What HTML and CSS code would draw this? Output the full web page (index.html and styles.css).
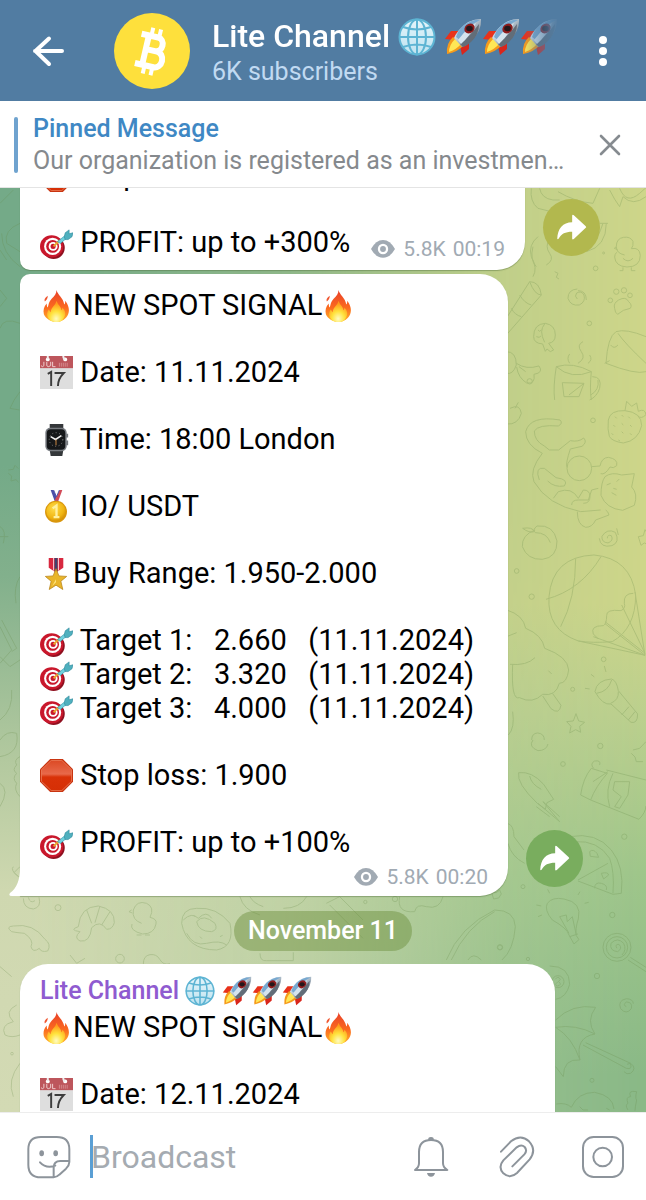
FILE: index.html
```html
<!DOCTYPE html>
<html lang="en">
<head>
<meta charset="utf-8">
<meta name="viewport" content="width=device-width, initial-scale=1">
<title>Lite Channel</title>
<link rel="stylesheet" href="styles.css">
</head>
<body>
<svg class="defs" aria-hidden="true">
  <defs>
    <linearGradient id="gFire" x1="0" y1="0" x2="0" y2="1"><stop offset="0" stop-color="#e8402a"/><stop offset=".55" stop-color="#fb6a1f"/><stop offset="1" stop-color="#ffb52b"/></linearGradient>
    <radialGradient id="gCore" cx=".5" cy=".85" r=".7"><stop offset="0" stop-color="#fffbc0"/><stop offset=".5" stop-color="#ffe23c"/><stop offset="1" stop-color="#ff9a1c"/></radialGradient>
    <linearGradient id="gStop" x1="0" y1="0" x2="0" y2="1"><stop offset="0" stop-color="#dc4a25"/><stop offset=".45" stop-color="#e8694a"/><stop offset=".55" stop-color="#d93208"/><stop offset="1" stop-color="#d62f05"/></linearGradient>
    <radialGradient id="gGold" cx=".4" cy=".35" r=".7"><stop offset="0" stop-color="#ffdc4a"/><stop offset=".7" stop-color="#f0b512"/><stop offset="1" stop-color="#d08d06"/></radialGradient>
    <linearGradient id="gHull" x1="0" y1="0" x2="1" y2="1"><stop offset="0" stop-color="#4d87b8"/><stop offset=".35" stop-color="#c9dcea"/><stop offset=".6" stop-color="#9aa7b3"/><stop offset="1" stop-color="#3f4a55"/></linearGradient>
    <linearGradient id="gGlobe" x1="0" y1="0" x2="0" y2="1"><stop offset="0" stop-color="#e3f4fa"/><stop offset="1" stop-color="#bfe3f0"/></linearGradient>
    <symbol id="fire" viewBox="0 0 34 34">
      <path d="M17 1c1 5 7 8 8 15 1-1 1-3 1-4 3 4 5 9 3 14-2 5-7 8-12 8S6 31 4 26c-1-4 0-8 3-11 0 2 0 3 1 4 1-3 1-6 4-9 3-3 5-5 5-9z" fill="url(#gFire)"/>
      <path d="M17 12c1 4 5 6 5 10 1-1 1-2 1-3 3 3 4 7 2 10-2 4-5 5-8 5s-7-1-9-5c-1-3-1-5 1-8 1 1 1 2 2 3 0-5 5-7 6-12z" fill="url(#gCore)"/>
      <path d="M5 13c-1-2 0-4 3-6 0 3-1 4-3 6z" fill="#ef5630"/>
    </symbol>
    <symbol id="dart" viewBox="0 0 34 34">
      <ellipse cx="14" cy="22.500" rx="11.500" ry="11.500" fill="#8f1020"/>
      <ellipse cx="12" cy="21" rx="12" ry="11.500" fill="#c9182c"/>
      <circle cx="13" cy="21" r="8.800" fill="#fff"/><circle cx="13" cy="21" r="6.600" fill="#c9182c"/>
      <circle cx="13.500" cy="21" r="4.600" fill="#fff"/><circle cx="13.500" cy="21" r="2.600" fill="#c9182c"/>
      <path d="M14 21l6-6" stroke="#e9a62c" stroke-width="2"/>
      <path d="M18 16l9-7 1 3-7 6z" fill="#6fd0dc" stroke="#2791a5" stroke-width=".6"/>
      <path d="M25 11l1-4 4-3 0 4 4-1-1 4-4 3-3 0z" fill="#4fb0be" stroke="#2b8799" stroke-width=".6"/>
    </symbol>
    <symbol id="calendar" viewBox="0 0 34 34">
      <rect width="34" height="34" fill="#dedede"/><rect width="34" height="12.500" fill="#bd565c"/>
      <circle cx="8" cy="3.500" r="2" fill="#fff"/><circle cx="26" cy="3.500" r="2" fill="#fff"/><path d="M8 0v3M24 0q0 3 2 3" stroke="#eee" stroke-width="2" fill="none"/>
      <path d="M4 6v4q-1 2-3 0M7 6v4q1 2 4 0V6M13 6v5h3" fill="none" stroke="#f0d0d0" stroke-width="1"/><path d="M20 7v4m2-4v4m2-4v4m2-4v4m2-4v4" stroke="#d58a8e" stroke-width="1"/>
      <path d="M8 18.500l3.500-2V31M15 17.500h9.500q-6 6-6 13.500" fill="none" stroke="#3d3d3d" stroke-width="2"/>
    </symbol>
    <symbol id="watch" viewBox="0 0 34 34">
      <path d="M10 1h14v5H10zM10 28h14l-1 6H11z" fill="#34373a"/>
      <rect x="5.500" y="5" width="22" height="24" rx="5" fill="#777b80"/><rect x="7" y="6.500" width="19" height="21" rx="4" fill="#151719"/><path d="M28 11v4m0 3v5" stroke="#777b80" stroke-width="2"/>
      <circle cx="16.500" cy="17" r="7" fill="none" stroke="#888" stroke-dasharray="1 2.600"/><path d="M11 14l5 3 6-4" fill="none" stroke="#eee" stroke-width="1.600"/><path d="M16.500 17v6" stroke="#d18b45"/>
    </symbol>
    <symbol id="medal" viewBox="0 0 34 34">
      <path d="M11 0h3l5 11h-4z" fill="#4b4fa8"/><path d="M23 0h-3l-5 11h4z" fill="#d24b58"/><path d="M14 0l3 7 3-7" fill="#fff" stroke="#4b4fa8"/>
      <circle cx="16.500" cy="22.500" r="11.300" fill="#d9960c"/><circle cx="16.500" cy="22" r="10" fill="url(#gGold)"/>
      <path d="M13 19l4-3v12m-3 0h6" fill="none" stroke="#fff0a0" stroke-width="2.400"/>
    </symbol>
    <symbol id="star" viewBox="0 0 34 34">
      <path d="M9 1h15v10l-7.500 5L9 11z" fill="#d8283f"/><path d="M15 1h3v14h-3z" fill="#40426c"/><path d="M14 1v13m5-13v13" stroke="#fff" stroke-width=".8"/>
      <path d="M16.500 12l3 7.500 8 .5-6 5 2 8.500-7-4.500-7 4.500 2-8.500-6-5 8-.5z" fill="#e9b52a" stroke="#b9851b" stroke-width=".8"/><path d="M16.500 14v9l-4 7 4-4z" fill="#ffe47a"/>
    </symbol>
    <symbol id="stop" viewBox="0 0 34 34">
      <path d="M10.500 0h13L34 10.500v13L23.500 34h-13L0 23.500v-13z" fill="#c9330f"/><path d="M11.500 1.500h11L32.500 11v12l-10 9.500h-11L1.500 23V11z" fill="url(#gStop)" stroke="#f08a68" stroke-width=".7"/>
    </symbol>
    <symbol id="rocket" viewBox="0 0 38 38">
      <path d="M15 13l-8 0-6 8 9 1z" fill="#e8321b"/><path d="M25 22v9l-7 6-2-9z" fill="#d9261c"/>
      <path d="M9 19q-7 6-6 17 11-2 17-9z" fill="#f59a1c"/><path d="M11 21q-6 6-6 13 8-3 12-8z" fill="#ffe756"/>
      <path d="M37 1q-13 0-22 11-4 5-5 8l8 9q4-1 9-6Q38 13 37 1z" fill="url(#gHull)"/>
      <path d="M31 2q-10 2-17 12l-2 5 4 3Q23 8 36 2z" fill="#78a9d0"/><path d="M35 6q-8 11-19 20l3 3q4-1 8-5 8-7 8-18z" fill="#626d78"/><path d="M32 5Q24 9 14 22l3 4q9-8 15-21z" fill="#d5e4ee"/>
      <ellipse cx="25.500" cy="10.500" rx="5.500" ry="4.500" transform="rotate(-40 25.500 10.500)" fill="#8e1c1c"/><ellipse cx="25.500" cy="10.500" rx="3.300" ry="2.700" fill="#25171a"/>
    </symbol>
    <symbol id="globe" viewBox="0 0 38 38">
      <circle cx="19" cy="19" r="17.500" fill="url(#gGlobe)"/>
      <g fill="none" stroke="#5db4d3" stroke-width="2"><circle cx="19" cy="19" r="17.500"/><ellipse cx="19" cy="19" rx="9" ry="17.500"/><path d="M19 1v36M1 19h36M5 9q14 5 28 0M5 29q14-5 28 0"/></g>
    </symbol>
    <symbol id="eye" viewBox="142 172 80 72"><path d="M145 208q15-28 37-28t37 28q-15 27-37 27t-37-27z" fill="#a1aab3"/><circle cx="182" cy="208" r="16" fill="#fff"/><circle cx="182" cy="208" r="9" fill="#a1aab3"/></symbol>
    <symbol id="share" viewBox="655 55 172 172"><path d="M698 175c1-31 17-50 45-50v-20q1-4 5-1l36 33q3 3 0 5l-36 34q-4 3-5-1v-21c-21 0-32 6-41 21q-3 3-4 0z" fill="#fff"/></symbol>
  </defs>
</svg>

<header class="topbar">
  <button class="icon-btn" aria-label="Back"><svg viewBox="0 0 48 48"><path d="M38 24H11M25 11.500L11.500 24 25 37" fill="none" stroke="#fff" stroke-width="4" stroke-linecap="round" stroke-linejoin="round"/></svg></button>
  <svg class="avatar" viewBox="0 0 76 76" role="img" aria-label="Channel logo"><circle cx="38" cy="38" r="38" fill="#fee03c"/><g transform="rotate(13 38 38)" fill="none" stroke="#fff" stroke-width="6"><path d="M24 23.500H41a6 7 0 0 1 0 14H31M31 37.500H43a7 8 0 0 1 0 16H24M31.500 23.500v30"/><path stroke-width="4" d="M34 15v8M42 15v8M34 54v8M42 54v8"/></g></svg>
  <div class="heading">
    <h1 class="title">Lite Channel <svg class="emoji"><use href="#globe"/></svg> <svg class="emoji"><use href="#rocket"/></svg><svg class="emoji"><use href="#rocket"/></svg><svg class="emoji"><use href="#rocket"/></svg></h1>
    <p class="subtitle">6K subscribers</p>
  </div>
  <button class="icon-btn" aria-label="Menu"><svg viewBox="0 0 48 48" fill="#fff"><circle cx="24" cy="13" r="4"/><circle cx="24" cy="24" r="4"/><circle cx="24" cy="35" r="4"/></svg></button>
</header>

<section class="pinned">
  <span class="pinned-mark"></span>
  <div class="pinned-text">
    <h2>Pinned Message</h2>
    <p>Our organization is registered as an investmen…</p>
  </div>
  <button class="icon-btn" aria-label="Close"><svg viewBox="0 0 48 48"><path d="M15 15l18 18M33 15L15 33" stroke="#868b90" stroke-width="2.600" stroke-linecap="round"/></svg></button>
</section>

<main class="chat">
  <div class="wall"></div>
  <svg class="doodles" viewBox="0 188 646 924" preserveAspectRatio="xMaxYMin slice" aria-hidden="true">
    <g transform="translate(323 180) scale(.3333)">
      <path d="M625 25q-5 40 20 60l40 10M650 25q5 30 40 35h20M705 35q50 30 105 35l20-45M860 30q15 30 30 50l10-30q30 30 69 0M890 25q20 50 60 15t19-20"/>
      <path d="M905 225q-25-5-25-25 0-25 22-28 20-3 28 12 2 15-5 22 25-5 27 20 0 35-40 35-35-2-37-30 0-8 6-14M900 262v10h-10m35-10v10h12M880 200l-6 5 10 4M900 235q15 15 30 0"/>
      <circle cx="842" cy="219" r="3"/><circle cx="818" cy="265" r="7"/><circle cx="799" cy="430" r="7"/>
      <path d="M763 357q-10-8-2-18 14-8 22 6 6 20-14 30-26 4-34-20 0-26 28-28M765 332q25 0 25 28"/>
      <path d="M875 385q-5-15 12-25 22-12 30 5 12 10 5 20-22 3-38 18-8-4-9-18z"/><circle cx="862" cy="361" r="7"/><circle cx="880" cy="335" r="8"/><circle cx="903" cy="331" r="8"/><circle cx="921" cy="346" r="7"/>
      <path d="M632 470q0-38 35-40 30 5 30 35 0 22-20 25l15 20-10 5-10-8-5 7-8-22q-27-2-27-22zM665 432q-18 20 0 55M645 450q5 8 10 0M640 470q10 5 14-2"/>
      <path d="M620 305l-70 110v50l105-120q-5-40-35-40zM655 345q-20 0-35-40M625 375q-20-5-35-30M595 410q-20-5-30-25"/>
      <path d="M645 170q-30 25-20 60 20 35 5 60M630 200q-10 40 10 60M680 175q-15 25 0 45t-10 35M695 275l10 5-5 12 8 5M850 130q0 70-60 85M840 130q-15 50-40 60M830 130h25"/>
      <path d="M550 515q30 0 30 40-10 30-30 25M580 550q30 20 68 8 15 20-15 25 5 30-22 26-25-15-30-48M588 560l20 15"/>
      <path d="M700 560q-10 60-5 100M805 575q-5 50 0 85M700 560q50-15 105 15-60 25-105-15zM808 590q30 0 22 35-8 25-30 35M825 600q5 30-22 45M718 608l65 2-15 40h-45zM783 610l-45 35M740 550q-10-15 0-28M765 550q25-15 10-35t5-30M795 550q15-10 5-25"/>
      <path d="M969 470q-60-25-90-15-25 15-30 95 90 35 120 25M885 460q20 30 84 90M863 495q10 14 22 0M845 550l15-8"/>
    </g>
    <g transform="translate(490 380) scale(.3333)">
      <circle cx="309" cy="121" r="7"/><circle cx="119" cy="4" r="8"/><path d="M60 85q30-15 34 15-10 35-44 32M75 85l10-18"/>
      <path d="M355 120q5-30 50-28 50 5 50 45-10 45-55 52-35-5-42-20-6-20-3-49zM405 92l5-28 15 15 15-10 5 25q20-10 23 10-15 15-25 3M375 110l5 5m15-10l5 5m15 0l5 5m-50 20l5 5m20-10l5 5m20 0l5 5m-60 20l5 5m25-10l5 5m20 0l5 5m-40 15l5 3"/>
      <path d="M210 120q10 10-5 18-60-5-72 15 0 30 30 45l15 12h28l35-28q25 5 40-8 12 12-5 25l-35 8q-15 45-10 55M210 120q-90-15-103 35 0 40 50 65-40 50-25 85 40 70 140 90l60-5"/><circle cx="268" cy="265" r="37"/>
      <path d="M148 300q-15-40 15-35l35 28q40 5 25 25-30 5-50-15M190 355l15-20q40-15 60 20l15-25q20 0 20 20t-20 20M245 375q0-15 20-15h30l10-30 20-5M305 260l25-2q5-25 25-26 30 5 25 25-10 10-20 4-15 25-28 20M345 290q20-15 50-5l38-4-8 40q20 20 8 55l-35 15q-50-5-65-45 0-40 12-56zM350 315l12-5m18-5l8-8m-18 28l10 3m-15 10l14 8M262 395q0 40 25 47 20 0 30-22l40-15q-2-10-10-15"/>
      <path d="M135 450q-40 15-38 50 15 40 60 38 45-5 44-55-10-50-60-45-15 12-5 20 35 0 45 30M98 445q20 15 35 10-5-15-35-10z"/>
      <path d="M352 475q0-12 12-8 8 15-10 22-20-2-18-20 15-25 40-12 15 30-10 40-35 8-38-22M380 445l5 20M445 470l15-3 5-18 10 15v30l-12-5-10 7z"/>
      <circle cx="80" cy="573" r="7"/><circle cx="125" cy="650" r="8"/><circle cx="341" cy="838" r="7"/><circle cx="248" cy="928" r="6"/>
      <path d="M265 783Q170 750 177 650q10-120 135-125 110 10 125 120 0 100-70 140-60 5-102-2zM257 535q0 120-45 205M333 530q-60 100-165 128M265 783l200 43-30-190M310 770l155 56-120-95M345 725l120 95-70-145M430 640q-30 0-27 30 5 15-10 22-45-5-43 15 0 25-10 30-40 0-30 25l15 15"/>
      <path d="M50 690q50 15 57 55 50 20 57 60 70 25 72 65-5 40-28 40-10 40-50 33-30 30-70 10-25 10-20-100M50 770l30-12M60 853q50 5 75-20M175 872l10 10M158 948l25 38q25 20 30-10l-25-35"/>
      <path d="M315 935q5-35 50-38 15 5 20 35l58 70q0 30-20 25l-60-55q-25 5-48-37zM320 940q35-5 45-40M362 970q25-10 23-35M395 1005l22-25M415 1020l20-25M343 858l5 18M303 883l10 8M285 925l14 2"/>
      <path d="M230 1025l20-2 8-22 8 22 18 4-15 12 3 18-15-8-18 10 4-20zM125 1080q0-20 18-21 20 2 20 21M55 1065q20-20 13-70"/>
    </g>
    <g transform="translate(323 740) scale(.3333)">
      <path d="M643 190Q580 130 587 98q40-5 75 35l30 45-20 10-5 20zM620 108q5 25 35 40M645 190l65 55-50-60 50 45M640 200l40 30M553 250q20 5 20 40l30 40M555 310q10 40 50 60"/>
      <circle cx="832" cy="18" r="8"/><circle cx="720" cy="72" r="7"/><circle cx="904" cy="290" r="8"/><circle cx="868" cy="525" r="8"/><circle cx="600" cy="440" r="6"/><circle cx="531" cy="622" r="8"/><circle cx="216" cy="477" r="8"/><circle cx="127" cy="486" r="5"/>
      <path d="M630 0q-15 20 15 32 25 0 30-20M805 85q-25 30-32 80l30 15q15-40 50-80zM803 180l145 58q20-20 21-40M850 90l119 30M870 100q-25 50-10 100M855 95l-45 30M830 75q5-15-15-12-15 8-3 22M875 125l45 0-5 40-25 40-15-5 20-30-25-20zM930 30l20-5 19-20M925 40q15 10 15 25h20"/>
      <path d="M740 290q80-15 125 40 40 50 30 130l-25 3-105-40M755 305q70-5 105 50 15 40 10 105M765 420l90-50M800 335q10-10 22 5l5 12-25-3zM835 400q20-5 22 5l-15 12zM815 445q0-20 20-15t15 20"/>
      <path d="M738 585q-5-20-50-45-25-30-15-50 15-20 50-13 55 10 43 60-10 30-6 50l8 12-15 13zM740 590l25-8M710 530l20-5 3 20 15-15 12 55M710 530l28 50M640 495l15 3M645 530l12-5M680 460l-6-12M765 465l6-10M785 490l12-3"/>
      <circle cx="882" cy="622" r="42"/><circle cx="882" cy="622" r="32"/><path d="M882 625q-8-12 6-12 12 12-4 22-25-2-20-25 20-20 38 0 10 20-5 35"/>
      <path d="M370 660q40-100 145-150 60 0 62 50-5 70-40 100M385 660q45-100 130-145M435 660q15-25 40 0"/>
      <path d="M505 455l15 3 10-8 5 12-8 12-15 3zM230 470q-10 50 45 45 5-25 35-15 40 10 50-30M10 490l40-20 70 70M20 495l100 100"/>
    </g>
    <g transform="translate(323 940) scale(.3333)">
      <path d="M915 60l54 35M922 52l47 30"/><circle cx="705" cy="125" r="18"/><path d="M680 78q60 0 60 55-10 40-42 45M697 118q8-12 15 0-5 8-8 8-12 10 0 12 14-4 4-12"/>
      <circle cx="822" cy="108" r="8"/><circle cx="807" cy="421" r="6"/><circle cx="615" cy="57" r="5"/><circle cx="531" cy="22" r="7"/>
      <path d="M910 200q-12-5 0-14 20 0 15 20-15 20-32 0-10-25 18-30 20 2 20 15"/>
      <path d="M698 240q50-50 120-38-30 40-2 80-60 10-45 78-50-5-50 50L698 380M698 262q60-10 118 20M698 262q50 30 73 98M780 315l130 70q20 5 12-15l-10 3M788 308l135 62q20 15 0 30-12 5-20-5"/>
      <path d="M700 492q30-5 45 10 20-45 70-45 55 10 58 50M770 500l10 10h15M850 505l10 5M915 510q-10-15 0-20-8-20 8-20-10-20 18-15-5 20 0 25-5 25-5 32"/>
    </g>
    <g transform="translate(0 860) scale(.3333)">
      <path d="M70 115q0 30 30 32 25-5 17-35M85 112q5 20 20 10"/><circle cx="174" cy="143" r="9"/><circle cx="360" cy="296" r="13"/><circle cx="36" cy="581" r="4"/>
      <path d="M35 215q-20-15 5-17 60-10 95 40 20 15 8 35-20 5-25-8-20 15-25-5 10-20-20-40-25-2-38-5z"/>
      <path d="M235 200q5-60 60-62 50 10 48 50-5 20-23 20-20-30-45-5-5 45-35 40-20-10 0-28-35-5-5-15zM260 150l15 40M300 138l-15 50M330 155l-25 40"/>
      <path d="M425 190q-30-10-25-40 10-30 40-20 25 12 10 42 22 5 18 20-5 30-40 30-40-10-32-30M410 225h15m10 0h15M395 150l-8 5 10 4"/>
      <path d="M545 190q0-45 45-45 60-5 100 45 15 70-40 80-90 0-105-80zM590 185q20-25 55 5 10 20-10 25-40 0-45-30zM550 180q25-25 45-5 25-25 40 0M560 220q20 40 60 30t60 5M580 165l6 6M660 230l8-4M600 230l6 6"/>
      <path d="M720 110q10 40 60 55M750 110q10 20 40 30M850 145q50 0 70-35M780 280q0 25 20 22h80v-25M210 285l20 25 25-15M430 312q0-25 20-28t30 15 30 12M0 320l35 30M50 435q-40 20-10 50-40 10-25 40 20 10 45 0M60 610q-40 50-20 100M40 20q-10 10 15 30"/>
    </g>
    <g transform="translate(0 390) scale(.3333)">
      <path d="M60 5q-20 25-30 50l28 5M25 240l15-2 5-12 10 10M25 250l10 8-2 15 15-4 8 8M0 410q20 10 10 50M0 440h25M60 560q-20 30-12 80M0 710l35 70-35 40M5 690l45 85-15 10M0 800l30 30 30-20M0 990q40-30 35-90M0 1050q20-30 50-20 10 60-50 70M60 1100q-20 10-10 25-15 15 0 25-15 15 0 30-10 20 10 40M0 1180q30 20 0 70M60 1430l-18 18 18 15"/>
      <path d="M0-560l40-40M60-500q-50 20-40 60l40 25M0-420l20 30M5-470q0 60 55 100M60-200q-50-20-60 15M0-300l20 25-20 25"/>
    </g>
  </svg>

  <div class="messages">
    <div class="row">
      <article class="bubble bubble-first">
        <div class="text">
          <p><svg class="emoji"><use href="#stop"/></svg> Stop loss</p>
          <p><svg class="emoji"><use href="#dart"/></svg> PROFIT: up to +300%</p>
        </div>
        <div class="meta"><svg class="eye"><use href="#eye"/></svg><span>5.8K</span><time>00:19</time></div>
      </article>
      <button class="share share-olive" aria-label="Share"><svg><use href="#share"/></svg></button>
    </div>

    <div class="row">
      <article class="bubble bubble-signal">
        <div class="text">
          <p><svg class="emoji"><use href="#fire"/></svg>NEW SPOT SIGNAL<svg class="emoji"><use href="#fire"/></svg></p>
          <p><svg class="emoji"><use href="#calendar"/></svg> Date: 11.11.2024</p>
          <p><svg class="emoji"><use href="#watch"/></svg> Time: 18:00 London</p>
          <p><svg class="emoji"><use href="#medal"/></svg> IO/ USDT</p>
          <p><svg class="emoji"><use href="#star"/></svg>Buy Range: 1.950-2.000</p>
          <p><svg class="emoji"><use href="#dart"/></svg> Target 1:   2.660   (11.11.2024)<br><svg class="emoji"><use href="#dart"/></svg> Target 2:   3.320   (11.11.2024)<br><svg class="emoji"><use href="#dart"/></svg> Target 3:   4.000   (11.11.2024)</p>
          <p><svg class="emoji"><use href="#stop"/></svg> Stop loss: 1.900</p>
          <p><svg class="emoji"><use href="#dart"/></svg> PROFIT: up to +100%</p>
        </div>
        <div class="meta"><svg class="eye"><use href="#eye"/></svg><span>5.8K</span><time>00:20</time></div>
        <svg class="tail" viewBox="0 0 14 28" aria-hidden="true"><path d="M14 0H11q0 18-10 25-2 3 2 3h11z" fill="#fff"/></svg>
      </article>
      <button class="share share-green" aria-label="Share"><svg><use href="#share"/></svg></button>
    </div>

    <div class="date">November 11</div>

    <div class="row">
      <article class="bubble bubble-last">
        <h3 class="sender">Lite Channel <svg class="emoji"><use href="#globe"/></svg> <svg class="emoji"><use href="#rocket"/></svg><svg class="emoji"><use href="#rocket"/></svg><svg class="emoji"><use href="#rocket"/></svg></h3>
        <div class="text">
          <p><svg class="emoji"><use href="#fire"/></svg>NEW SPOT SIGNAL<svg class="emoji"><use href="#fire"/></svg></p>
          <p><svg class="emoji"><use href="#calendar"/></svg> Date: 12.11.2024</p>
        </div>
      </article>
    </div>
  </div>
</main>

<footer class="composer">
  <button class="icon-btn" aria-label="Stickers"><svg viewBox="74 818 144 144" fill="none" stroke="#8d949b" stroke-width="6" stroke-linecap="round" stroke-linejoin="round"><path d="M160 951H122q-38 0-38-38v-46q0-37 38-37h47q38 0 38 37v38q0 10-10 20l-20 18q-8 8-17 8zM160 950v-28q0-20 20-20h26M119 906q18 20 46 10"/><g fill="#8d949b" stroke="none"><ellipse cx="124" cy="879" rx="7" ry="9"/><ellipse cx="166" cy="879" rx="7" ry="9"/></g></svg></button>
  <input class="field" type="text" placeholder="Broadcast" aria-label="Broadcast">
  <div class="tools">
    <button class="icon-btn" aria-label="Notifications"><svg viewBox="251 578 144 144" fill="none" stroke="#8d949b" stroke-width="6" stroke-linejoin="round"><path d="M275 689q12-8 12-20v-34q0-36 36-36t36 36v34q0 12 13 20z"/><path d="M315 600q-2-10 8-10t8 10zM311 698h24q-2 11-12 11t-12-11z" fill="#8d949b" stroke="none"/></svg></button>
    <button class="icon-btn" aria-label="Attach"><svg viewBox="510 578 144 144" fill="none" stroke="#8d949b" stroke-width="6" stroke-linecap="round"><path d="M534 634l30-31q29-23 54 0 24 26 2 54l-38 41q-21 19-41 1-17-19 0-39l40-39q14-10 24-1 9 11-1 22l-36 36"/></svg></button>
    <button class="icon-btn" aria-label="Camera"><svg viewBox="768 579 144 144" fill="none" stroke="#8d949b" stroke-width="6"><rect x="780" y="591" width="120" height="120" rx="32"/><circle cx="839" cy="651" r="28"/></svg></button>
  </div>
</footer>
</body>
</html>
```
FILE: styles.css
```css
* { box-sizing: border-box; margin: 0; padding: 0; }

body {
  display: flex;
  flex-direction: column;
  height: 100vh;
  overflow: hidden;
  font-family: Roboto, "Liberation Sans", sans-serif;
  color: #000;
  background: #fff;
}

.defs { position: absolute; width: 0; height: 0; }

button { border: 0; background: none; }

.icon-btn { flex: none; width: 48px; height: 48px; }
.icon-btn svg { display: block; width: 100%; height: 100%; }

.topbar {
  flex: none;
  display: flex;
  align-items: center;
  height: 101px;
  padding: 0 19px 0 24px;
  background: #517ca2;
}
.avatar { flex: none; width: 76px; height: 76px; margin: 0 22px 0 42px; }
.heading { flex: 1; min-width: 0; margin-right: 20px; padding-top: 4px; }
.title {
  overflow: hidden;
  white-space: nowrap;
  font-size: 32px;
  font-weight: 500;
  line-height: 38px;
  color: #fff;
  -webkit-mask-image: linear-gradient(to right, #000 calc(100% - 36px), transparent);
  mask-image: linear-gradient(to right, #000 calc(100% - 36px), transparent);
}
.title .emoji { width: 38px; height: 38px; vertical-align: -9px; }
.subtitle { font-size: 25px; line-height: 32px; color: #c1daf2; }

.pinned {
  flex: none;
  display: flex;
  align-items: center;
  gap: 15px;
  height: 87px;
  padding: 2px 12px 0 14px;
  border-bottom: 1px solid #e4e4e4;
  background: #fff;
}
.pinned-mark {
  flex: none;
  width: 4px;
  height: 56px;
  border-radius: 2px;
  background: #6fa3cf;
}
.pinned-text {
  flex: 1;
  min-width: 0;
  font-size: 25px;
  line-height: 32px;
  white-space: nowrap;
}
.pinned-text h2 { font-size: 25px; font-weight: 500; color: #3f88c4; }
.pinned-text p { color: #85898d; }

.chat { position: relative; flex: 1; min-height: 0; overflow: hidden; }
.wall,
.doodles { position: absolute; inset: 0; width: 100%; height: 100%; }
.wall { background: linear-gradient(#ced68a 45%, #bcd08e 57%, #9fc68b 74%, #8ab987 96%); }
.wall::before {
  content: "";
  position: absolute;
  inset: 0;
  background: linear-gradient(#74aa88 30%, #82b08c 42%, #b3c99f 62%, #cfd8b0 76%, #d3dab4);
  -webkit-mask-image: linear-gradient(to right, #000 4%, rgba(0, 0, 0, .7) 45%, rgba(0, 0, 0, .15) 78%, transparent);
  mask-image: linear-gradient(to right, #000 4%, rgba(0, 0, 0, .7) 45%, rgba(0, 0, 0, .15) 78%, transparent);
}
.doodles {
  fill: none;
  stroke: #668a48;
  stroke-width: 3px;
  stroke-linejoin: round;
  opacity: .26;
}

.messages {
  position: relative;
  display: flex;
  flex-direction: column;
  gap: 4px;
  margin-top: -30px;
  padding-left: 20px;
}
.row { display: flex; align-items: flex-end; gap: 18px; }

.bubble {
  position: relative;
  padding: 0 20px;
  background: #fff;
  box-shadow: 0 1px 1px rgba(70, 100, 50, .4);
}
.bubble-first {
  display: flex;
  align-items: flex-end;
  gap: 20px;
  padding-bottom: 9px;
  border-radius: 0 0 28px 10px;
}
.bubble-first .text { padding-bottom: 2px; }
.bubble-signal {
  width: min(488px, 80%);
  padding-top: 14px;
  padding-bottom: 7px;
  border-radius: 10px 28px 28px 0;
}
.bubble-signal .meta { margin-top: 6px; }
.bubble-last {
  width: min(535px, 86%);
  padding-top: 10px;
  padding-bottom: 40px;
  border-radius: 28px 28px 0 0;
}

.text { font-size: 29px; line-height: 34px; }
.text p { white-space: pre-wrap; }
.text p + p { margin-top: 33px; }
.text .emoji { width: 33px; height: 33px; vertical-align: -7px; }

.sender {
  margin-bottom: 2px;
  font-size: 25px;
  font-weight: 500;
  line-height: 34px;
  color: #8f5bd0;
}
.sender .emoji { width: 30px; height: 30px; vertical-align: -7px; }

.meta {
  display: flex;
  justify-content: flex-end;
  align-items: center;
  gap: 7px;
  font-size: 21px;
  line-height: 24px;
  color: #a1aab3;
}
.eye { width: 26px; height: 24px; }

.tail { position: absolute; left: -11px; bottom: 0; width: 14px; height: 28px; }

.share { flex: none; width: 57px; height: 57px; border-radius: 50%; }
.share svg { display: block; width: 100%; height: 100%; }
.share-olive { margin-bottom: 14px; background: #b2b84e; }
.share-green { margin-bottom: 9px; background: #79ad5e; }

.date {
  align-self: center;
  margin: 11px 20px 9px 0;
  padding: 0 14px;
  border-radius: 20px;
  font-size: 25px;
  font-weight: 500;
  line-height: 40px;
  color: #fff;
  background: rgba(100, 135, 50, .42);
}

.composer {
  flex: none;
  display: flex;
  align-items: center;
  height: 88px;
  padding: 0 19px 0 25px;
  border-top: 1px solid #ededed;
  background: #fff;
}
.field {
  flex: 1;
  min-width: 0;
  height: 43px;
  margin-left: 17px;
  border: 0;
  border-left: 3px solid #5a9fd4;
  outline: 0;
  font: 32px Roboto, "Liberation Sans", sans-serif;
  text-indent: -2px;
  color: #000;
  background: none;
}
.field::placeholder { color: #a5abb1; opacity: 1; }
.tools { display: flex; gap: 38px; }
```
